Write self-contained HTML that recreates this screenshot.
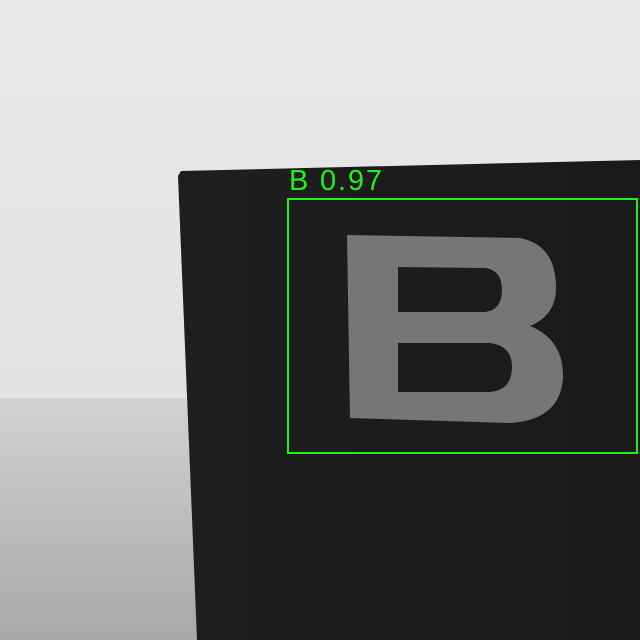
<!DOCTYPE html>
<html><head><style>
html,body{margin:0;padding:0;width:640px;height:640px;overflow:hidden;background:#e6e6e6}
</style></head><body>
<svg width="640" height="640" viewBox="0 0 640 640" xmlns="http://www.w3.org/2000/svg">
<defs>
<linearGradient id="wall" x1="0" y1="0" x2="0" y2="1">
<stop offset="0" stop-color="#e9e9e9"/><stop offset="1" stop-color="#dedede"/>
</linearGradient>
<linearGradient id="table" x1="0" y1="0" x2="0" y2="1">
<stop offset="0" stop-color="#d2d2d2"/><stop offset="1" stop-color="#a8a8a8"/>
</linearGradient>
<linearGradient id="box" x1="0" y1="0" x2="1" y2="0">
<stop offset="0" stop-color="#1e1e1e"/><stop offset="1" stop-color="#1a1a1a"/>
</linearGradient>
</defs>
<rect width="640" height="640" fill="url(#wall)"/>
<rect y="398" width="640" height="242" fill="url(#table)"/>
<path d="M181 171 L640 160 L640 640 L197 640 L178 176 Z" fill="url(#box)"/>
<path d="M347 235 L520 238 Q556 245 556 288 Q556 315 530 326 Q564 340 563 378 Q560 420 510 423 L350 418 Z M398 267 L485 268 Q502 270 502 290 Q502 310 485 312 L398 312 Z M398 343 L490 343 Q512 346 512 367 Q512 390 490 392 L398 392 Z" fill="#767676" fill-rule="evenodd"/>
<rect x="288" y="199" width="349" height="254" fill="none" stroke="#22ee22" stroke-width="2"/>
<text x="289" y="190" fill="#22ee22" font-family="Liberation Sans, sans-serif" font-size="29" textLength="93" lengthAdjust="spacing">B 0.97</text>
</svg>
</body></html>
